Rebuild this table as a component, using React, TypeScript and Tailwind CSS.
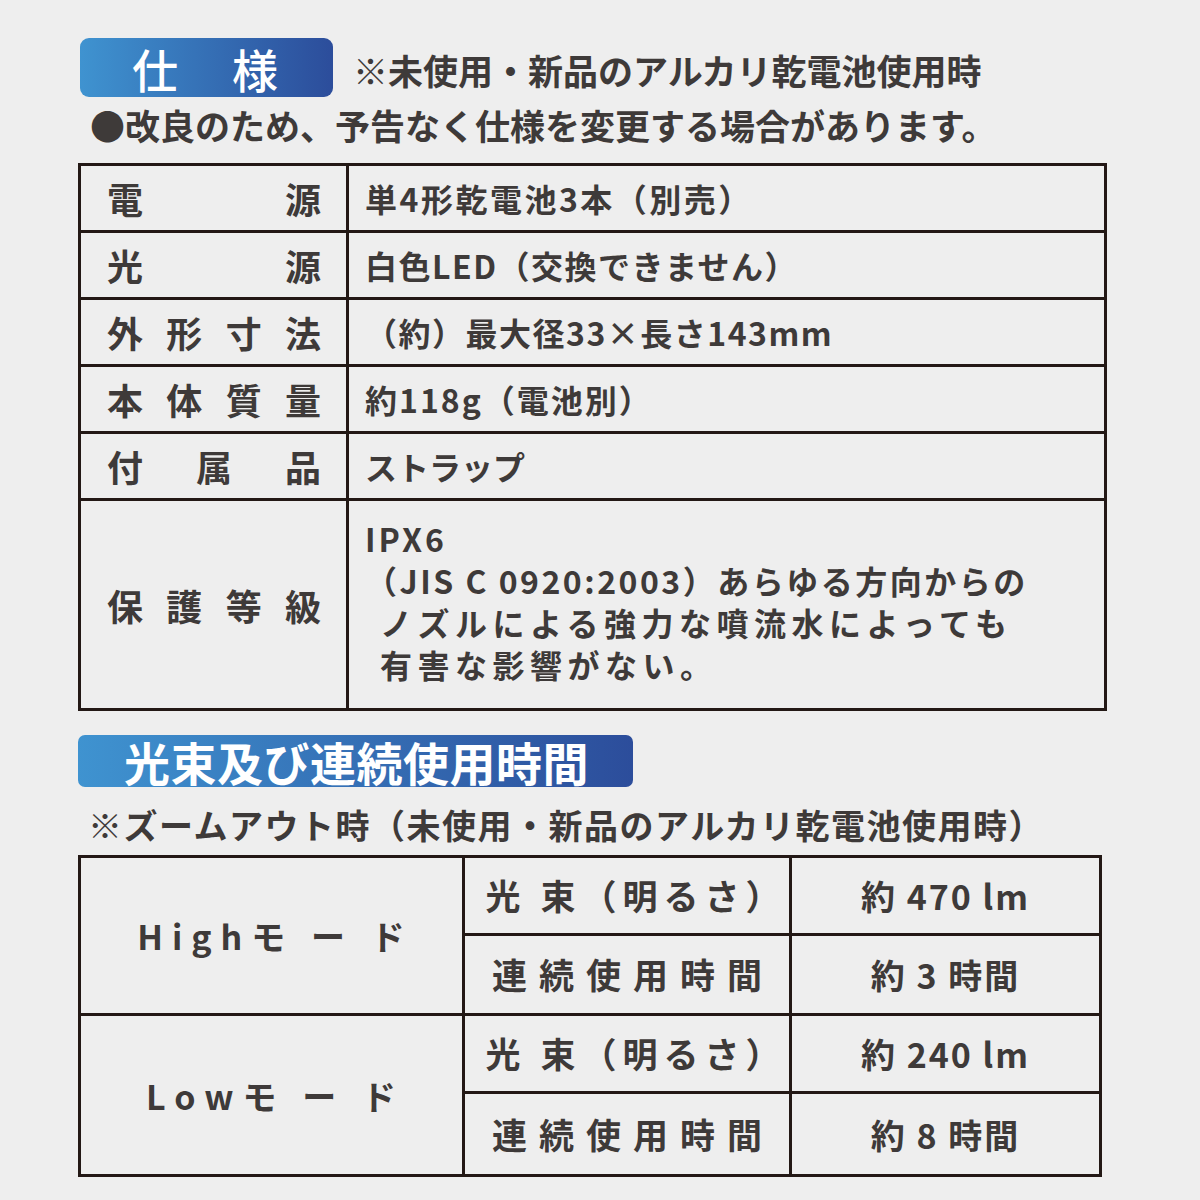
const FONT = {
  fontFamily: '"Noto Sans CJK JP", "Noto Sans", sans-serif',
};

const specRows = [
  { label: ["電", "源"], value: "単4形乾電池3本（別売）", track: "tracking-[2.5px]" },
  { label: ["光", "源"], value: "白色LED（交換できません）", track: "tracking-[1.5px]" },
  { label: ["外", "形", "寸", "法"], value: "（約）最大径33×長さ143mm", track: "tracking-[1.5px]" },
  { label: ["本", "体", "質", "量"], value: "約118g（電池別）", track: "tracking-[2px]" },
  { label: ["付", "属", "品"], value: "ストラップ", track: "tracking-[0px]" },
];

const modes = [
  {
    name: "Highモ ー ド",
    rows: [
      { k: "光 束（明るさ）", v: "約 470 lm" },
      { k: "連続使用時間", v: "約 3 時間" },
    ],
  },
  {
    name: "Lowモ ー ド",
    rows: [
      { k: "光 束（明るさ）", v: "約 240 lm" },
      { k: "連続使用時間", v: "約 8 時間" },
    ],
  },
];

function Label({ chars }: { chars: string[] }) {
  return (
    <div className="flex w-[268px] shrink-0 items-center justify-between border-r-[3px] border-[#231815] pl-[26px] pr-[25px] text-[36px] font-bold">
      {chars.map((c) => (
        <span key={c}>{c}</span>
      ))}
    </div>
  );
}

export default function App() {
  return (
    <div
      className="h-[1200px] w-[1200px] bg-[#eeeeee] pl-[78px] pt-[38px] text-[#3e3a39]"
      style={FONT}
    >
      {/* 仕様 header */}
      <div className="flex items-center">
        <div className="ml-[2px] flex h-[59px] w-[253px] items-center rounded-[9px] bg-gradient-to-r from-[#3f93d0] to-[#2c4d9b] pl-[52px] text-[46px] font-medium leading-none text-white">
          <span>仕</span>
          <span className="ml-[54px]">様</span>
        </div>
        <p className="ml-[20px] mt-[4px] text-[35px] font-bold leading-none">
          ※未使用・新品のアルカリ乾電池使用時
        </p>
      </div>
      <p className="mt-[8px] pl-[12px] text-[35px] font-bold leading-[40px]">
        ●改良のため、予告なく仕様を変更する場合があります。
      </p>

      {/* spec table */}
      <div className="mt-[18px] w-[1029px] border-[3px] border-[#231815]">
        {specRows.map((r) => (
          <div
            key={r.value}
            className="flex h-[67px] border-b-[3px] border-[#231815]"
          >
            <Label chars={r.label} />
            <div
              className={`flex items-center pl-[16px] text-[32px] font-bold ${r.track}`}
            >
              {r.value}
            </div>
          </div>
        ))}
        <div className="flex h-[207px]">
          <Label chars={["保", "護", "等", "級"]} />
          <div className="pl-[16px] pt-[16px] text-[32px] font-bold leading-[42px]">
            <p className="tracking-[3px]">IPX6</p>
            <p className="tracking-[2.5px]">
              （JIS C 0920:2003）あらゆる方向からの
            </p>
            <p className="pl-[15px] tracking-[5.5px]">
              ノズルによる強力な噴流水によっても
            </p>
            <p className="pl-[15px] tracking-[5.5px]">有害な影響がない。</p>
          </div>
        </div>
      </div>

      {/* 光束 header */}
      <div className="mt-[24px] flex h-[52px] w-[555px] items-center rounded-[7px] bg-gradient-to-r from-[#3f93d0] to-[#2c4d9b] pl-[46px] text-[46px] font-bold leading-none tracking-[0.5px] text-white">
        光束及び連続使用時間
      </div>
      <p className="mt-[18px] pl-[10px] text-[34px] font-bold leading-[40px] tracking-[1.5px]">
        ※ズームアウト時（未使用・新品のアルカリ乾電池使用時）
      </p>

      {/* mode table */}
      <div className="mt-[10px] w-[1024px] border-[3px] border-[#231815]">
        {modes.map((m, i) => (
          <div
            key={m.name}
            className={
              i === 0
                ? "flex h-[158px] border-b-[3px] border-[#231815]"
                : "flex h-[158px]"
            }
          >
            <div className="flex w-[384px] shrink-0 items-center justify-center border-r-[3px] border-[#231815] pl-[8px] text-[34px] font-bold tracking-[9px]">
              {m.name}
            </div>
            <div className="flex flex-1 flex-col">
              {m.rows.map((r, j) => (
                <div
                  key={r.k}
                  className={
                    j === 0
                      ? "flex h-[78px] border-b-[3px] border-[#231815]"
                      : "flex flex-1"
                  }
                >
                  <div
                    className={
                      j === 0
                        ? "flex w-[327px] shrink-0 items-center justify-center border-r-[3px] border-[#231815] pl-[18px] text-[35px] font-bold tracking-[6px]"
                        : "flex w-[327px] shrink-0 items-center justify-center border-r-[3px] border-[#231815] pl-[12px] text-[35px] font-bold tracking-[12px]"
                    }
                  >
                    {r.k}
                  </div>
                  <div className="flex flex-1 items-center justify-center text-[34px] font-bold tracking-[2px]">
                    {r.v}
                  </div>
                </div>
              ))}
            </div>
          </div>
        ))}
      </div>
    </div>
  );
}
